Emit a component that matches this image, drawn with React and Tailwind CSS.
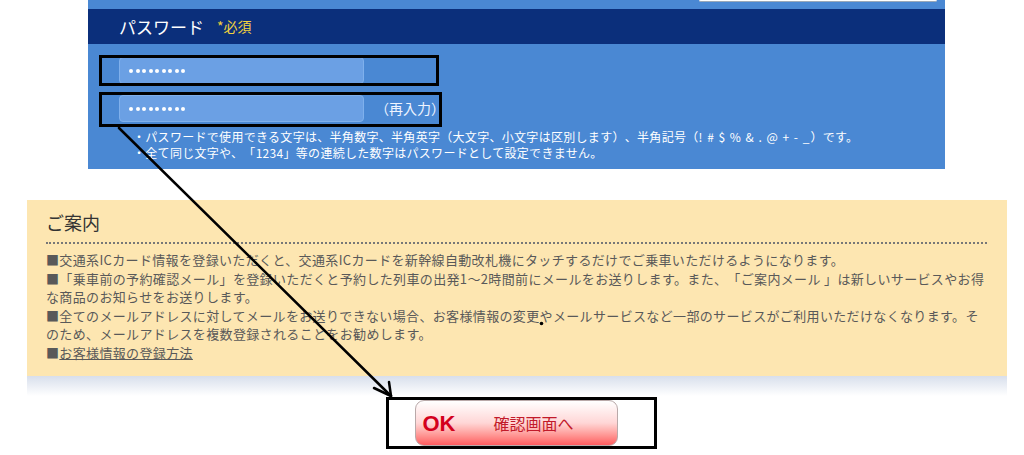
const jp = "font-['Noto_Sans_CJK_JP','Noto_Sans',sans-serif] [text-spacing-trim:space-all]";

// Black hand-drawn annotations laid over the screenshot.
function Annotations() {
  return (
    <svg className="pointer-events-none absolute inset-0" width="1024" height="455" viewBox="0 0 1024 455">
      <g fill="none" stroke="#000" strokeWidth="3">
        <rect x="100.5" y="56.5" width="337" height="28" />
        <rect x="100.5" y="93.5" width="340" height="32" />
        <rect x="387.5" y="398.5" width="268" height="49" />
      </g>
      <g fill="none" stroke="#000" strokeWidth="2.5" strokeLinecap="round">
        <path d="M119 128 L391 396" />
        <path d="M374 388 L391 396" />
        <path d="M389 382 L391 396" />
      </g>
      <circle cx="541.5" cy="323.5" r="1.8" fill="#000" />
    </svg>
  );
}

function PasswordField({ suffix }) {
  return (
    <div className="flex items-center">
      <div className="flex h-[27px] w-[245px] items-center gap-[2.5px] rounded-[4px] border border-[#7fb0ec] bg-[#6ba0e4] pl-[9px]">
        {[0, 1, 2, 3, 4, 5, 6, 7, 8].map((i) => (
          <span key={i} className="h-[4px] w-[4px] rounded-full bg-white" />
        ))}
      </div>
      {suffix && <span className="ml-[11px] text-[14px] text-[#eef4ff]">{suffix}</span>}
    </div>
  );
}

export default function App() {
  return (
    <div className={`relative h-[455px] w-[1024px] overflow-hidden bg-white ${jp}`}>
      <section className="ml-[88px] w-[857px] bg-[#4a88d3]">
        <div className="flex h-[9px] justify-end pr-[8px]">
          <div className="h-[2px] w-[238px] rounded-b-[3px] border-b border-[#9aa8b8] bg-white" />
        </div>
        <div className="flex h-[35px] items-center bg-[#0b2f7b] pl-[31px]">
          <span className="text-[17px] text-white">パスワード</span>
          <span className="ml-[13px] text-[14px] text-[#f3d33d]">*必須</span>
        </div>
        <div className="flex flex-col gap-[11px] pl-[31px] pt-[13px]">
          <PasswordField />
          <PasswordField suffix="（再入力）" />
        </div>
        <ul className="pb-[8px] pl-[45px] pt-[7px] text-[12px] leading-[16px] tracking-[0.3px] text-white">
          <li>
            ・パスワードで使用できる文字は、半角数字、半角英字（大文字、小文字は区別します）、半角記号（
            <span className="tracking-[1px]">! # $ % &amp; . @ + - _</span>）です。
          </li>
          <li>・全て同じ文字や、「1234」等の連続した数字はパスワードとして設定できません。</li>
        </ul>
      </section>

      <section className="ml-[27px] mt-[31px] w-[980px]">
        <div className="bg-[#fde6b1] pb-[14px] pl-[19px] pr-[10px] pt-[10px]">
          <h2 className="text-[18px] leading-[24px] text-[#333]">ご案内</h2>
          <div className="mr-[10px] mt-[8px] border-b-2 border-dotted border-[#777]" />
          <div className="mt-[7px] text-[13px] leading-[18.5px] tracking-[0.35px] text-[#595959]">
            <p>■交通系ICカード情報を登録いただくと、交通系ICカードを新幹線自動改札機にタッチするだけでご乗車いただけるようになります。</p>
            <p>
              ■「乗車前の予約確認メール」を登録いただくと予約した列車の出発1～2時間前にメールをお送りします。また、「ご案内メール 」は新しいサービスやお得
              <br />
              な商品のお知らせをお送りします。
            </p>
            <p>
              ■全てのメールアドレスに対してメールをお送りできない場合、お客様情報の変更やメールサービスなど一部のサービスがご利用いただけなくなります。そ
              <br />
              のため、メールアドレスを複数登録されることをお勧めします。
            </p>
            <p>
              ■<span className="underline">お客様情報の登録方法</span>
            </p>
          </div>
        </div>
        <div className="h-[20px] bg-gradient-to-b from-[#d8dfec] to-white" />
      </section>

      <div className="flex justify-center pl-[8px] pt-[4px]">
        <button className="flex h-[46px] w-[203px] items-center rounded-[9px] border border-[#b9a9a9] bg-gradient-to-b from-white via-[#ffd6d6] to-[#ff5a5f] pl-[7px]">
          <span className="font-['Liberation_Sans',sans-serif] text-[22px] font-bold text-[#d3001c]">OK</span>
          <span className="ml-[38px] text-[16px] text-[#c21a2a]">確認画面へ</span>
        </button>
      </div>

      <Annotations />
    </div>
  );
}
